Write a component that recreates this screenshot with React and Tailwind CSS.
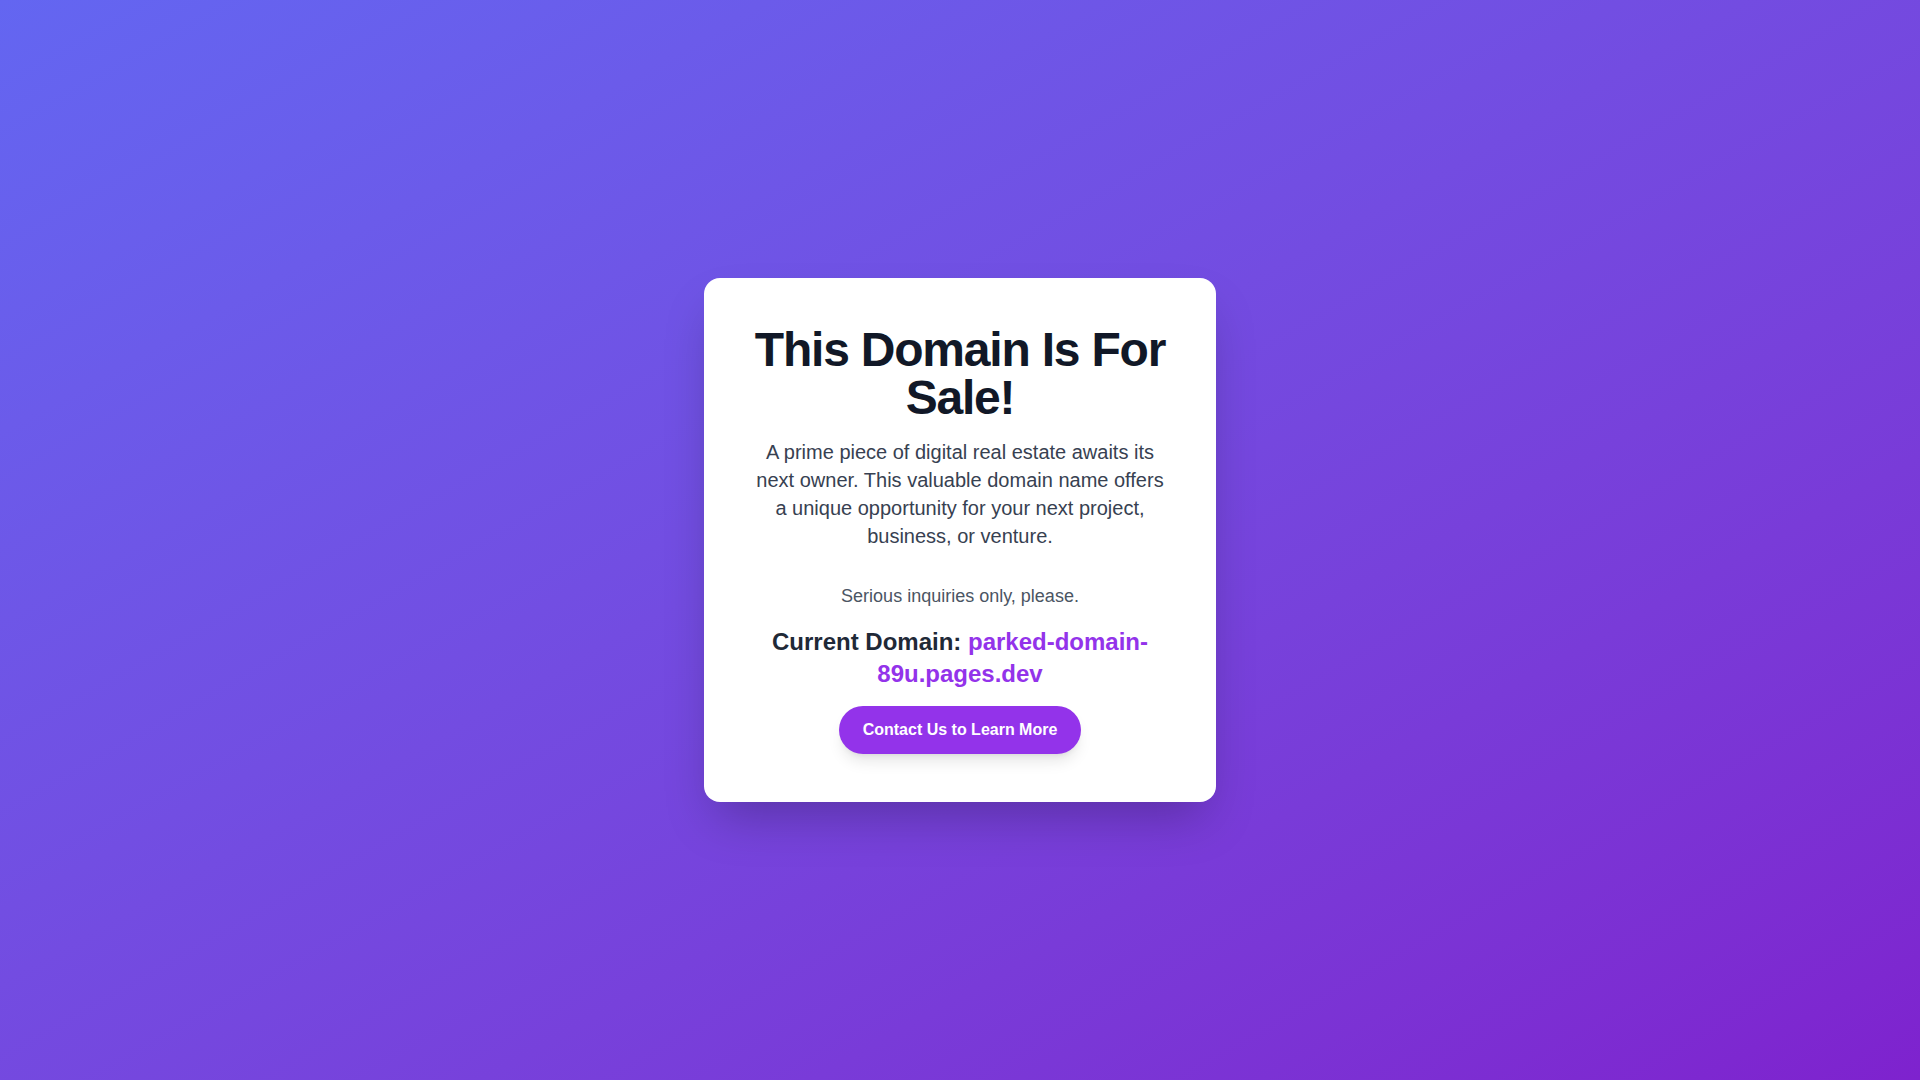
import React from 'react'

export default function App(){
  return (
    <div className="min-h-screen flex items-center justify-center bg-gradient-to-br from-[#6366f1] to-[#7e22ce] font-['Liberation_Sans',Arial,sans-serif]">
      <div className="bg-white rounded-2xl shadow-2xl p-12 w-[512px] text-center">
        <h1 className="text-5xl leading-none font-bold tracking-tight text-[#111827] mb-4">This Domain Is For Sale!</h1>
        <p className="text-xl leading-7 text-[#374151] mb-8">
          A prime piece of digital real estate awaits its next owner. This valuable domain name offers a unique opportunity for your next project, business, or venture.
        </p>
        <p className="text-lg leading-7 text-[#4b5563] mb-4">Serious inquiries only, please.</p>
        <p className="text-2xl leading-8 font-bold text-[#1f2937] mb-4">
          Current Domain: <span className="text-[#9333ea]">parked-domain-89u.pages.dev</span>
        </p>
        <button className="px-6 py-3 rounded-full bg-[#9333ea] text-white font-bold text-base leading-6 shadow-lg">Contact Us to Learn More</button>
      </div>
    </div>
  )
}
